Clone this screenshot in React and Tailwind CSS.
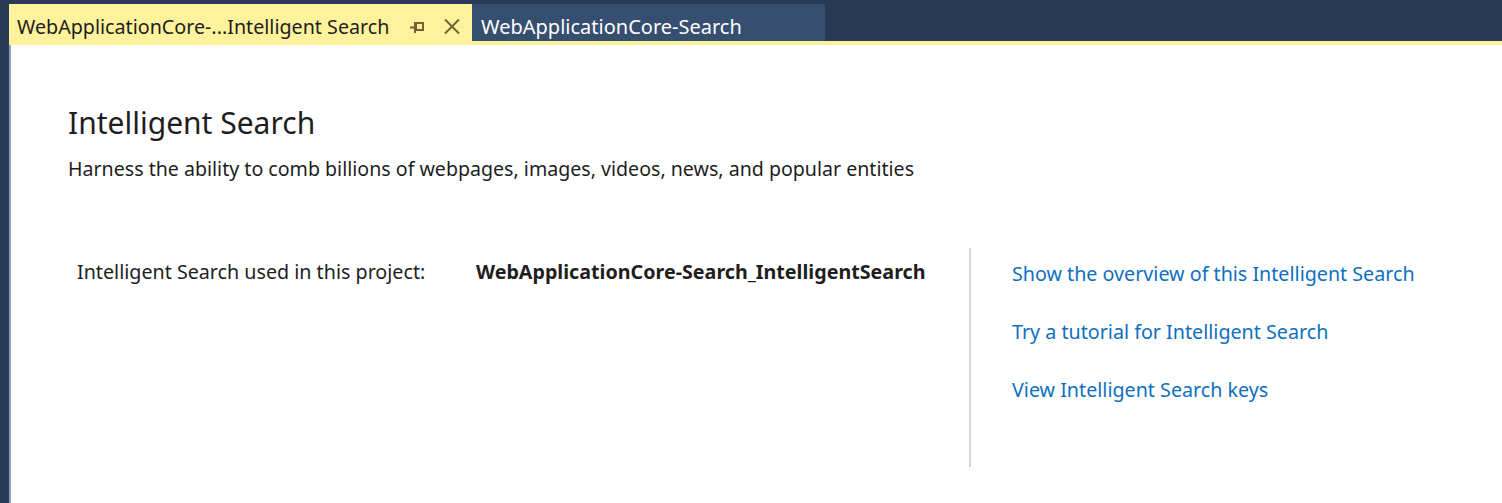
import React from "react";

const font = { fontFamily: '"Noto Sans", "Open Sans", sans-serif' };

function PinIcon() {
  return (
    <svg width="15" height="12" viewBox="0 0 15 12" className="block">
      <path d="M0 6.5 H5" stroke="#716233" strokeWidth="2" />
      <path d="M5 1 V12" stroke="#716233" strokeWidth="2" />
      <rect x="6" y="2" width="7" height="7" fill="none" stroke="#716233" strokeWidth="2" />
    </svg>
  );
}

function CloseIcon() {
  return (
    <svg width="18" height="15" viewBox="0 0 18 15" className="block">
      <path d="M2 0.5 L16 14.5 M16 0.5 L2 14.5" stroke="#716233" strokeWidth="2" />
    </svg>
  );
}

export default function App() {
  return (
    <div className="w-[1502px] h-[503px] bg-[#293a56] flex flex-col overflow-hidden" style={font}>
      <div className="h-[41px] pt-[4px] pl-[9px] flex shrink-0">
        <div className="w-[463px] h-full bg-[#fff29d] flex items-center pt-[8px] pl-[8px] text-[19.7px] text-[#1e1e1e]">
          <span className="whitespace-nowrap">WebApplicationCore-...Intelligent Search</span>
          <div className="ml-auto flex items-center">
            <div className="mr-[18px] mt-[1px]"><PinIcon /></div>
            <div className="mr-[11px]"><CloseIcon /></div>
          </div>
        </div>
        <div className="w-[353px] h-full bg-[#364e6f] flex items-center pt-[8px] pl-[9px] text-[20px] text-white">
          <span className="whitespace-nowrap">WebApplicationCore-Search</span>
        </div>
      </div>
      <div className="ml-[9px] h-[4px] bg-[#fff29d] shrink-0" />
      <div className="flex flex-1 ml-[9px]">
        <div className="w-[2px] bg-[#8fa0c4]" />
        <div className="flex-1 bg-white pl-[57px] pt-[58px]">
          <h1 className="text-[30px] leading-[40px] text-[#1e1e1e]">Intelligent Search</h1>
          <p className="mt-[13px] text-[19.6px] leading-[26px] text-[#1e1e1e]">
            Harness the ability to comb billions of webpages, images, videos, news, and popular entities
          </p>
          <div className="flex mt-[66px]">
            <div className="w-[901px] flex pt-[11px] pl-[9px] text-[19.7px] leading-[26px] text-[#1e1e1e]">
              <span className="w-[399px] whitespace-nowrap">Intelligent Search used in this project:</span>
              <span className="font-bold whitespace-nowrap">WebApplicationCore-Search_IntelligentSearch</span>
            </div>
            <div className="w-[2px] h-[219px] bg-[#d4d4de]" />
            <div className="pl-[41px] pt-[13px] flex flex-col gap-[32px] text-[19.7px] leading-[26px] text-[#0e70c0]">
              <span className="whitespace-nowrap">Show the overview of this Intelligent Search</span>
              <span className="whitespace-nowrap">Try a tutorial for Intelligent Search</span>
              <span className="whitespace-nowrap">View Intelligent Search keys</span>
            </div>
          </div>
        </div>
      </div>
    </div>
  );
}
